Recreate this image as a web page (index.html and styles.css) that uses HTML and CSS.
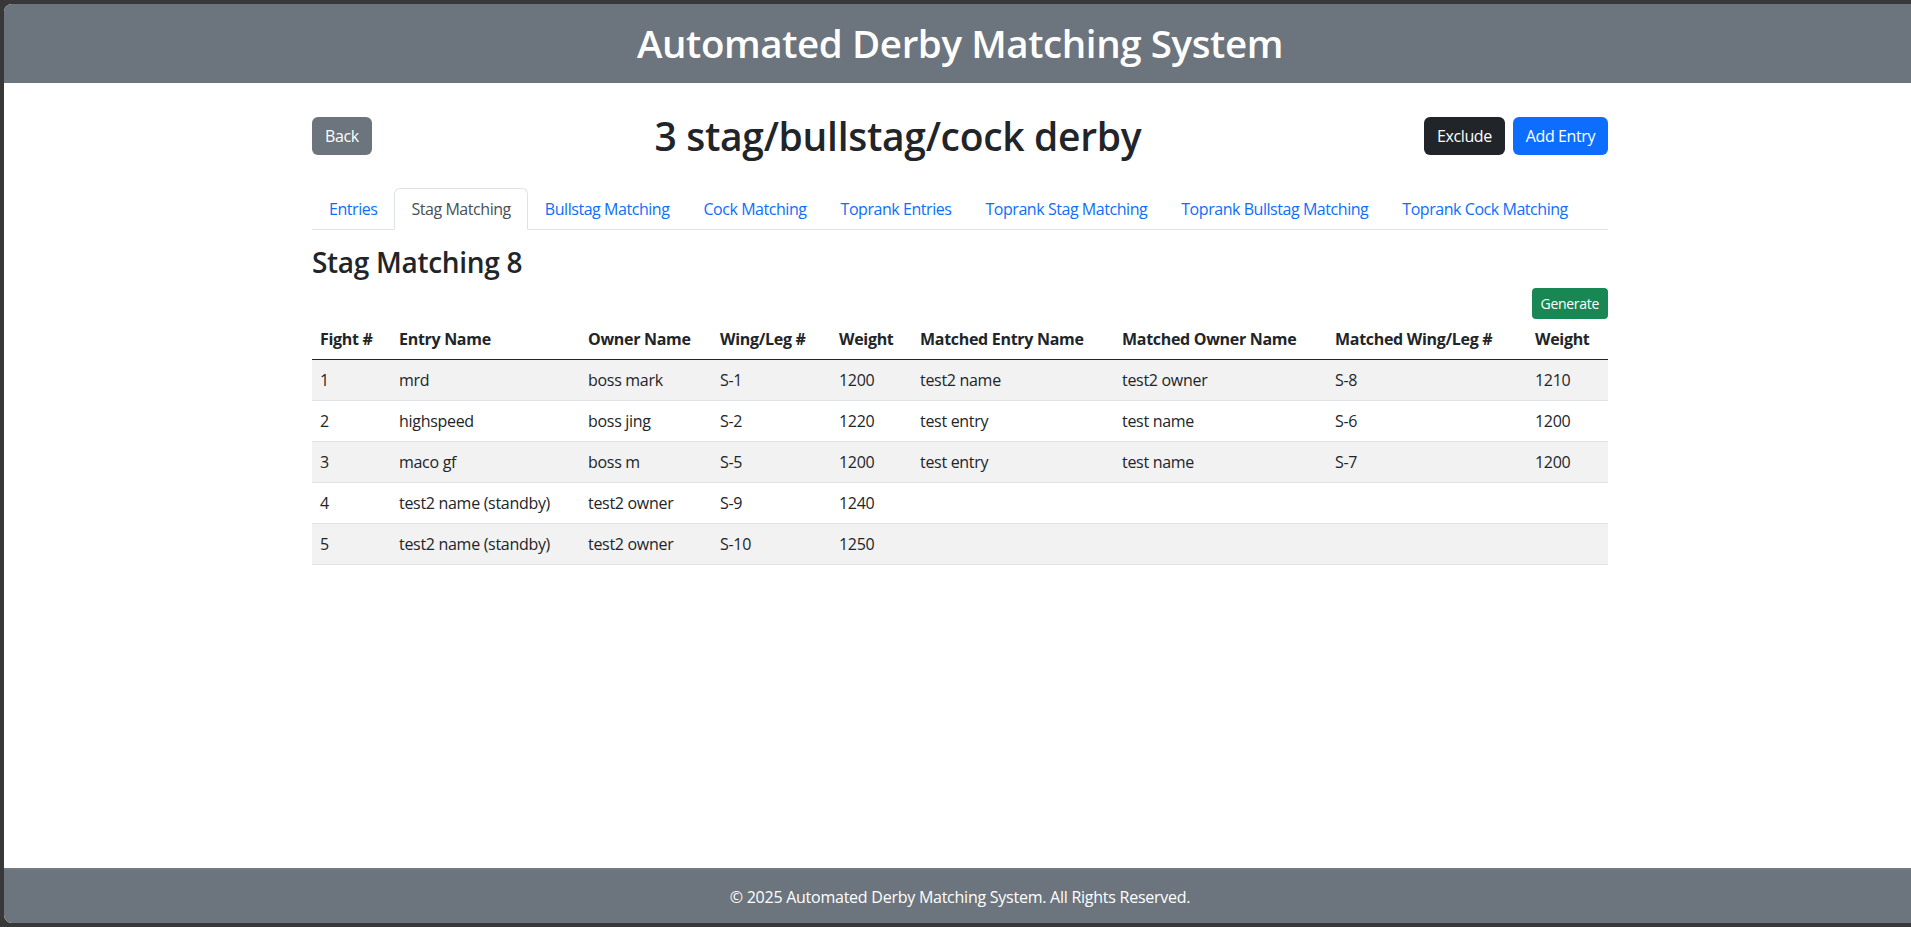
FILE: index.html
```html
<!DOCTYPE html>
<html lang="en">
<head>
<meta charset="utf-8">
<title>Automated Derby Matching System</title>
<link rel="stylesheet" href="styles.css">
</head>
<body>
<div class="frame">
  <div class="page">
    <header class="site-header">
      <h1 class="site-title">Automated Derby Matching System</h1>
    </header>
    <main class="main">
      <div class="container">
        <div class="title-row">
          <button class="btn btn-secondary">Back</button>
          <h1 class="derby-title">3 stag/bullstag/cock derby</h1>
          <div class="btn-group">
            <button class="btn btn-dark">Exclude</button>
            <button class="btn btn-primary">Add Entry</button>
          </div>
        </div>
        <ul class="tabs">
          <li><a class="tab-link">Entries</a></li>
          <li><a class="tab-link active">Stag Matching</a></li>
          <li><a class="tab-link">Bullstag Matching</a></li>
          <li><a class="tab-link">Cock Matching</a></li>
          <li><a class="tab-link">Toprank Entries</a></li>
          <li><a class="tab-link">Toprank Stag Matching</a></li>
          <li><a class="tab-link">Toprank Bullstag Matching</a></li>
          <li><a class="tab-link">Toprank Cock Matching</a></li>
        </ul>
        <h3 class="section-title">Stag Matching 8</h3>
        <div class="actions">
          <button class="btn btn-sm btn-success">Generate</button>
        </div>
        <table class="match-table">
          <colgroup>
            <col class="c1"><col class="c2"><col class="c3"><col class="c4"><col class="c5">
            <col class="c6"><col class="c7"><col class="c8"><col class="c9">
          </colgroup>
          <thead>
            <tr>
              <th>Fight #</th><th>Entry Name</th><th>Owner Name</th><th>Wing/Leg #</th><th>Weight</th>
              <th>Matched Entry Name</th><th>Matched Owner Name</th><th>Matched Wing/Leg #</th><th>Weight</th>
            </tr>
          </thead>
          <tbody>
            <tr><td>1</td><td>mrd</td><td>boss mark</td><td>S-1</td><td>1200</td><td>test2 name</td><td>test2 owner</td><td>S-8</td><td>1210</td></tr>
            <tr><td>2</td><td>highspeed</td><td>boss jing</td><td>S-2</td><td>1220</td><td>test entry</td><td>test name</td><td>S-6</td><td>1200</td></tr>
            <tr><td>3</td><td>maco gf</td><td>boss m</td><td>S-5</td><td>1200</td><td>test entry</td><td>test name</td><td>S-7</td><td>1200</td></tr>
            <tr><td>4</td><td>test2 name (standby)</td><td>test2 owner</td><td>S-9</td><td>1240</td><td></td><td></td><td></td><td></td></tr>
            <tr><td>5</td><td>test2 name (standby)</td><td>test2 owner</td><td>S-10</td><td>1250</td><td></td><td></td><td></td><td></td></tr>
          </tbody>
        </table>
      </div>
    </main>
    <footer class="site-footer">© 2025 Automated Derby Matching System. All Rights Reserved.</footer>
  </div>
</div>
</body>
</html>
```

FILE: styles.css
```css
* { box-sizing: border-box; }
html, body { margin: 0; padding: 0; }
body {
  width: 1911px;
  height: 927px;
  overflow: hidden;
  background: #383838;
  font-family: "Open Sans", "Noto Sans", sans-serif;
  font-size: 16px;
  line-height: 1.5;
  color: #212529;
}
.frame {
  padding: 4px 0 4px 4px;
  height: 927px;
}
.page {
  width: 1912px;
  height: 919px;
  display: flex;
  flex-direction: column;
  background: #fff;
  border-radius: 8px 0 0 8px;
  overflow: hidden;
}
.site-header {
  background: #6c757d;
  height: 79px;
  display: flex;
  align-items: center;
  justify-content: center;
  flex: none;
}
.site-title {
  margin: 0;
  color: #fff;
  font-size: 38.5px;
  font-weight: 600;
  line-height: 1.2;
  letter-spacing: -0.4px;
}
.main { flex: 1; }
.container {
  width: 1320px;
  margin: 0 auto;
  padding: 29px 12px 0;
}
.title-row {
  display: flex;
  align-items: center;
  justify-content: space-between;
  height: 48px;
}
.derby-title {
  margin: 0;
  font-size: 39px;
  font-weight: 600;
  line-height: 1.2;
  letter-spacing: -0.3px;
}
.btn-group { display: flex; gap: 8px; }
.btn {
  font-family: inherit;
  font-size: 16px;
  line-height: 24px;
  padding: 6px 12px;
  border: 1px solid transparent;
  border-radius: 6px;
  color: #fff;
  letter-spacing: -0.4px;
}
.btn-secondary { background: #6c757d; }
.btn-dark { background: #212529; }
.btn-primary { background: #0d6efd; }
.btn-sm {
  font-size: 14px;
  line-height: 21px;
  padding: 4px 8px;
  border-radius: 4px;
  letter-spacing: -0.3px;
}
.btn-success { background: #198754; }
.tabs {
  list-style: none;
  margin: 28px 0 0;
  padding: 0;
  display: flex;
  border-bottom: 1px solid #dee2e6;
}
.tabs li { flex: none; }
.tab-link {
  display: block;
  padding: 8px 16px;
  margin-bottom: -1px;
  border: 1px solid transparent;
  border-radius: 6px 6px 0 0;
  color: #0d6efd;
  white-space: nowrap;
  letter-spacing: -0.45px;
}
.tab-link.active {
  color: #495057;
  background: #fff;
  border-color: #dee2e6 #dee2e6 #fff;
}
.section-title {
  margin: 16px 0 8px;
  font-size: 28px;
  font-weight: 600;
  line-height: 1.2;
  letter-spacing: -0.3px;
}
.actions {
  display: flex;
  justify-content: flex-end;
}
.match-table {
  width: 100%;
  border-collapse: collapse;
  table-layout: fixed;
}
.c1 { width: 79px; }
.c2 { width: 189px; }
.c3 { width: 132px; }
.c4 { width: 119px; }
.c5 { width: 81px; }
.c6 { width: 202px; }
.c7 { width: 213px; }
.c8 { width: 200px; }
.c9 { width: 81px; }
.match-table th,
.match-table td {
  text-align: left;
  padding: 8px;
  line-height: 24px;
  white-space: nowrap;
  letter-spacing: -0.3px;
}
.match-table th {
  font-weight: 700;
  border-bottom: 1px solid #212529;
}
.match-table td {
  border-bottom: 1px solid #dee2e6;
}
.match-table tbody tr:nth-child(odd) td { background: #f2f2f2; }
.site-footer {
  flex: none;
  height: 55px;
  background: #6c757d;
  border-top: 2px solid #737a81;
  color: #fff;
  display: flex;
  align-items: center;
  justify-content: center;
  letter-spacing: -0.25px;
}
```
